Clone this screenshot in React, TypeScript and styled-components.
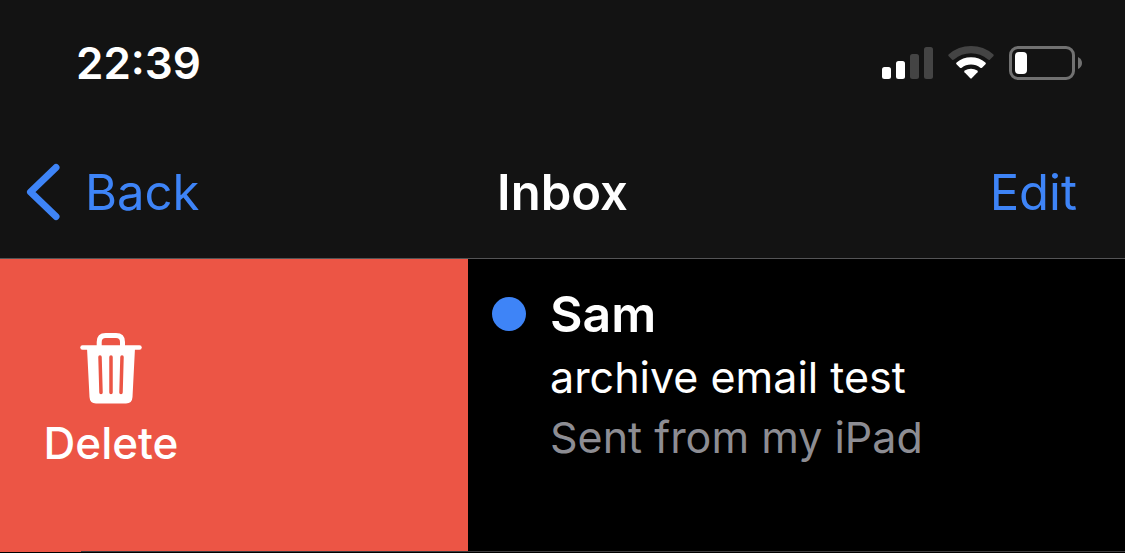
import React from 'react';
import styled, { createGlobalStyle } from 'styled-components';

const blue = '#3e84f7';

const GlobalStyle = createGlobalStyle`
  *, *::before, *::after { box-sizing: border-box; }
  body {
    margin: 0;
    background: #000;
    color: #fff;
    font-family: Inter, "Liberation Sans", sans-serif;
  }
  svg { display: block; }
`;

const Header = styled.header`
  background: #131313;
  border-bottom: 1px solid #545456;
`;

const StatusBar = styled.div`
  display: flex;
  align-items: center;
  justify-content: space-between;
  height: 126px;
  padding: 0 42px 0 76px;
`;

const Time = styled.time`
  font-size: 44px;
  line-height: 60px;
  font-weight: 600;
`;

const StatusIcons = styled.div`
  display: flex;
  align-items: center;
  gap: 15px;
`;

const NavBar = styled.nav`
  display: grid;
  grid-template-columns: 1fr auto 1fr;
  align-items: center;
  height: 132px;
`;

const NavButton = styled.button<{ $end?: boolean }>`
  display: flex;
  align-items: center;
  justify-self: ${({ $end }) => ($end ? 'end' : 'start')};
  gap: 24px;
  padding: 0 48px 0 26px;
  border: 0;
  background: none;
  color: ${blue};
  font: 400 49px/61px Inter, "Liberation Sans", sans-serif;
  cursor: pointer;
`;

const Title = styled.h1`
  margin: 0;
  font-size: 49px;
  line-height: 61px;
  font-weight: 600;
`;

const MailRow = styled.article`
  display: flex;
  height: 293px;
`;

const SwipePanel = styled.div`
  flex: 0 0 468px;
  display: flex;
  background: #ec5545;
`;

const DeleteButton = styled.button`
  display: flex;
  flex-direction: column;
  align-items: center;
  justify-content: center;
  gap: 8px;
  width: 222px;
  padding: 0 0 5px;
  border: 0;
  background: none;
  color: #fff;
  font: 500 44px/60px Inter, "Liberation Sans", sans-serif;
  cursor: pointer;
`;

const Message = styled.div`
  flex: 1;
  display: flex;
  gap: 24px;
  min-width: 0;
  padding: 25px 24px 0;
`;

const UnreadDot = styled.span`
  flex: none;
  width: 34px;
  height: 34px;
  margin-top: 13px;
  border-radius: 50%;
  background: ${blue};
`;

const MessageText = styled.div`
  min-width: 0;
  white-space: nowrap;
`;

const Sender = styled.h2`
  margin: 0 0 3px;
  font-size: 50px;
  line-height: 60px;
  font-weight: 600;
`;

const Line = styled.p<{ $muted?: boolean }>`
  margin: 0;
  font-size: 43px;
  line-height: 60px;
  color: ${({ $muted }) => ($muted ? '#8d8d93' : '#fff')};
`;

const Separator = styled.hr`
  height: 1px;
  margin: -1px 0 1px 81px;
  border: 0;
  background: #3d3d40;
  position: relative;
`;

const Signal = () => (
  <svg width="51" height="34" viewBox="0 0 51 34" aria-label="Signal: two of four bars" role="img">
    <rect x="0" y="21" width="9" height="12" rx="2.5" fill="#fff" />
    <rect x="14" y="15" width="9" height="18" rx="2.5" fill="#fff" />
    <rect x="28" y="8" width="9" height="25" rx="2.5" fill="#444" />
    <rect x="42" y="1" width="9" height="32" rx="2.5" fill="#444" />
  </svg>
);

const Wifi = () => (
  <svg width="46" height="34" viewBox="0 0 46 34" aria-label="Wi-Fi" role="img">
    <path d="M.7 10.2Q-.2 9.2.8 8.3Q10.2 0 23 0Q35.8 0 45.2 8.3Q46.2 9.2 45.3 10.2L41.8 13.7Q41 14.4 40 13.6Q32.5 7.3 23 7.3Q13.5 7.3 6 13.6Q5 14.4 4.2 13.7Z" fill="#444" />
    <path d="M8.5 18.2Q7.6 17.3 8.6 16.4Q14.7 11.2 23 11.2Q31.3 11.2 37.4 16.4Q38.4 17.3 37.5 18.2L34 21.7Q33.2 22.4 32.3 21.7Q28.3 18.4 23 18.4Q17.7 18.4 13.7 21.7Q12.8 22.4 12 21.7Z" fill="#fff" />
    <path d="M16.5 26.2Q15.7 25.3 16.7 24.6Q19.5 22.8 23 22.8Q26.5 22.8 29.3 24.6Q30.3 25.3 29.5 26.2L23.7 32.3Q23 33 22.3 32.3Z" fill="#fff" />
  </svg>
);

const Battery = () => (
  <svg width="74" height="34" viewBox="0 0 74 34" aria-label="Battery low" role="img">
    <rect x="1.5" y="1.5" width="63" height="31" rx="7.5" fill="none" stroke="#717171" strokeWidth="3" />
    <rect x="6" y="6" width="12" height="22" rx="4" fill="#fff" />
    <path d="M69 11Q73 13 73 17Q73 21 69 23Z" fill="#717171" />
  </svg>
);

const Chevron = () => (
  <svg width="35" height="58" viewBox="0 0 35 58" aria-hidden="true">
    <path d="M30 4.5L4.5 29L30 53.5" fill="none" stroke={blue} strokeWidth="7" strokeLinecap="round" strokeLinejoin="round" />
  </svg>
);

const Trash = () => (
  <svg width="62" height="72" viewBox="0 0 62 72" aria-hidden="true">
    <path d="M19.2 15V9Q19.2 2.5 25.7 2.5H36Q42.5 2.5 42.5 9V15" fill="none" stroke="#fff" strokeWidth="5" />
    <path d="M2.5 14.5H59.5" stroke="#fff" strokeWidth="4.5" strokeLinecap="round" />
    <path d="M7 15H55L52.5 64Q52.2 70.5 46 70.5H16Q9.8 70.5 9.5 64Z" fill="#fff" />
    <path d="M20 24L21 59.5M31 24V59.5M42 24L41 59.5" stroke="#ec5545" strokeWidth="3.5" strokeLinecap="round" />
  </svg>
);

export default function App() {
  return (
    <>
      <GlobalStyle />
      <Header>
        <StatusBar>
          <Time>22:39</Time>
          <StatusIcons>
            <Signal />
            <Wifi />
            <Battery />
          </StatusIcons>
        </StatusBar>
        <NavBar>
          <NavButton type="button">
            <Chevron />
            Back
          </NavButton>
          <Title>Inbox</Title>
          <NavButton type="button" $end>
            Edit
          </NavButton>
        </NavBar>
      </Header>
      <main>
        <MailRow>
          <SwipePanel>
            <DeleteButton type="button">
              <Trash />
              Delete
            </DeleteButton>
          </SwipePanel>
          <Message>
            <UnreadDot role="img" aria-label="Unread" />
            <MessageText>
              <Sender>Sam</Sender>
              <Line>archive email test</Line>
              <Line $muted>Sent from my iPad</Line>
            </MessageText>
          </Message>
        </MailRow>
        <Separator />
      </main>
    </>
  );
}
